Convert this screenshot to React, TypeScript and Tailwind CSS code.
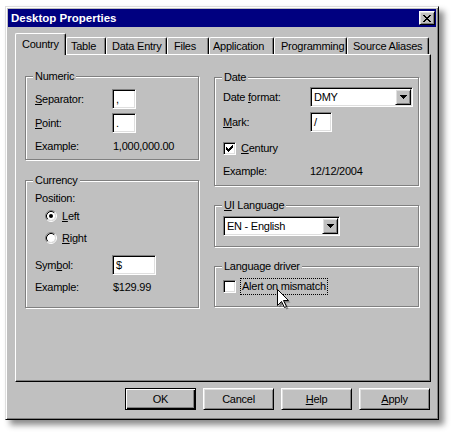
import React from "react";

const raised =
  "border border-t-white border-l-white border-r-black border-b-black shadow-[inset_1px_1px_#dfdfdf,inset_-1px_-1px_#808080]";
const sunken =
  "border border-t-[#808080] border-l-[#808080] border-r-white border-b-white shadow-[inset_1px_1px_#000,inset_-1px_-1px_#dfdfdf] bg-white";

function U({ children }: { children: React.ReactNode }) {
  return <span className="underline underline-offset-[1px] decoration-1">{children}</span>;
}

function Group({
  label,
  className,
  children,
}: {
  label: React.ReactNode;
  className: string;
  children?: React.ReactNode;
}) {
  return (
    <div
      className={`relative border border-[#808080] shadow-[inset_1px_1px_#fff,1px_1px_#fff] ${className}`}
    >
      <span className="absolute left-[7px] top-[-7px] bg-[#c0c0c0] px-[2px] leading-[13px]">
        {label}
      </span>
      {children}
    </div>
  );
}

function Radio({ checked }: { checked?: boolean }) {
  return (
    <svg width="12" height="12" viewBox="0 0 12 12">
      <path d="M2.11 9.89A5.5 5.5 0 0 1 9.89 2.11" fill="none" stroke="#808080" />
      <path d="M9.89 2.11A5.5 5.5 0 0 1 2.11 9.89" fill="none" stroke="#fff" />
      <circle cx="6" cy="6" r="4" fill="#fff" />
      <path d="M2.82 9.18A4.5 4.5 0 0 1 9.18 2.82" fill="none" stroke="#000" />
      <path d="M9.18 2.82A4.5 4.5 0 0 1 2.82 9.18" fill="none" stroke="#dfdfdf" />
      {checked && <circle cx="6" cy="6" r="2" fill="#000" />}
    </svg>
  );
}

function Check({ checked }: { checked?: boolean }) {
  const tops = [2, 3, 4, 3, 2, 1, 0];
  return (
    <div className={`w-[13px] h-[13px] shrink-0 ${sunken} flex items-center justify-center`}>
      {checked && (
        <svg width="7" height="7" viewBox="0 0 7 7" shapeRendering="crispEdges">
          {tops.map((t, c) => (
            <rect key={c} x={c} y={t} width="1" height="3" fill="#000" />
          ))}
        </svg>
      )}
    </div>
  );
}

function DropArrow() {
  return (
    <svg width="7" height="4" viewBox="0 0 7 4" shapeRendering="crispEdges">
      <rect x="0" y="0" width="7" height="1" fill="#000" />
      <rect x="1" y="1" width="5" height="1" fill="#000" />
      <rect x="2" y="2" width="3" height="1" fill="#000" />
      <rect x="3" y="3" width="1" height="1" fill="#000" />
    </svg>
  );
}

function Select({ value, className }: { value: string; className: string }) {
  return (
    <div className={`${sunken} h-[20px] flex items-center ${className}`}>
      <span className="flex-1 pl-[3px]">{value}</span>
      <div className={`${raised} bg-[#c0c0c0] w-[16px] h-[16px] flex items-center justify-center mr-[1px]`}>
        <DropArrow />
      </div>
    </div>
  );
}

function CloseX() {
  const rows: [number, number][][] = [
    [[0, 2], [6, 2]],
    [[1, 2], [5, 2]],
    [[2, 4]],
    [[3, 2]],
    [[2, 4]],
    [[1, 2], [5, 2]],
    [[0, 2], [6, 2]],
  ];
  return (
    <svg width="8" height="7" viewBox="0 0 8 7" shapeRendering="crispEdges">
      {rows.map((r, y) =>
        r.map(([x, w], i) => <rect key={`${y}-${i}`} x={x} y={y} width={w} height="1" fill="#000" />)
      )}
    </svg>
  );
}

function Cursor() {
  return (
    <svg width="16" height="23" viewBox="0 0 16 23" className="absolute left-[277px] top-[289px]">
      <path
        d="M2.5 2.5 V18.5 L6.5 14.5 L9.5 20.5 L11.5 19.5 L8.5 13.5 H13.5 Z"
        fill="rgba(0,0,0,0.35)"
      />
      <path
        d="M0.5 0.5 V16.5 L4.5 12.5 L7.5 18.5 L9.5 17.5 L6.5 11.5 H11.5 Z"
        fill="#fff"
        stroke="#000"
        strokeLinejoin="miter"
      />
    </svg>
  );
}

const tabs = [
  { label: "Table", w: "w-[40px]", pl: "pl-[4px]" },
  { label: "Data Entry", w: "w-[61px]", pl: "pl-[5px]" },
  { label: "Files", w: "w-[42px]", pl: "pl-[6px]" },
  { label: "Application", w: "w-[65px]", pl: "pl-[3px]" },
  { label: "Programming", w: "w-[73px]", pl: "pl-[6px]" },
  { label: "Source Aliases", w: "w-[82px]", pl: "pl-[5px]" },
];

function Button({ children, def }: { children: React.ReactNode; def?: boolean }) {
  const cls = def
    ? "border border-black shadow-[inset_1px_1px_#fff,inset_-1px_-1px_#000,inset_-2px_-2px_#808080]"
    : raised;
  return (
    <div className={`${cls} w-[71px] h-[22px] flex items-center justify-center`}>{children}</div>
  );
}

export default function App() {
  return (
    <div className="relative w-[454px] h-[434px] bg-white pl-[5px] pt-[6px] font-['Liberation_Sans',Arial,sans-serif] text-[11px] tracking-[-0.25px] leading-[13px] text-black">
      <div className="w-[434px] h-[414px] bg-[#c0c0c0] border border-t-[#dfdfdf] border-l-[#dfdfdf] border-r-black border-b-black p-[2px] shadow-[inset_1px_1px_#fff,inset_-1px_-1px_#808080,5px_5px_6px_rgba(0,0,0,0.45)] flex flex-col">
        {/* Title bar */}
        <div className="h-[18px] bg-[#000080] flex items-center justify-between pl-[3px] shrink-0">
          <span className="text-white font-bold text-[11.5px] tracking-normal">Desktop Properties</span>
          <div className={`${raised} bg-[#c0c0c0] w-[16px] h-[14px] mr-[1px] flex items-center justify-center`}>
            <CloseX />
          </div>
        </div>

        <div className="pl-[7px] pr-[5px] pt-[6px] flex flex-col">
          {/* Tabs */}
          <div className="flex items-end h-[21px]">
            <div className="relative z-10 mb-[-1px] w-[51px] h-[22px] bg-[#c0c0c0] border-t border-l border-t-white border-l-white border-r border-r-black shadow-[inset_-1px_0_#808080] rounded-t-[2px] flex items-center pl-[6px] pb-[1px]">
              Country
            </div>
            {tabs.map((t) => (
              <div
                key={t.label}
                className={`${t.w} ${t.pl} h-[17px] border-t border-l border-t-white border-l-white border-r border-r-black shadow-[inset_-1px_0_#808080] rounded-t-[2px] flex items-center`}
              >
                {t.label}
              </div>
            ))}
          </div>

          {/* Panel */}
          <div className="h-[328px] border border-t-white border-l-white border-r-black border-b-black shadow-[inset_-1px_-1px_#808080] pl-[9px] pt-[21px] flex gap-[15px]">
            {/* Left column */}
            <div className="w-[174px] flex flex-col gap-[20px]">
              <Group label="Numeric" className="h-[84px]">
                <div className="flex flex-col pl-[9px] pt-[12px]">
                  <div className="flex items-center h-[20px]">
                    <span className="w-[77px]">
                      <U>S</U>eparator:
                    </span>
                    <div className={`${sunken} w-[24px] h-[20px] pl-[3px] flex items-center`}>,</div>
                  </div>
                  <div className="flex items-center h-[20px] mt-[4px]">
                    <span className="w-[77px]">
                      <U>P</U>oint:
                    </span>
                    <div className={`${sunken} w-[24px] h-[20px] pl-[3px] flex items-center`}>.</div>
                  </div>
                  <div className="flex items-center h-[20px] mt-[3px]">
                    <span className="w-[78px]">Example:</span>
                    <span>1,000,000.00</span>
                  </div>
                </div>
              </Group>

              <Group label="Currency" className="h-[128px]">
                <div className="flex flex-col pl-[9px] pt-[7px]">
                  <div className="flex items-center h-[20px]">Position:</div>
                  <div className="flex items-center h-[16px] pl-[10px] gap-[5px]">
                    <Radio checked />
                    <span>
                      <U>L</U>eft
                    </span>
                  </div>
                  <div className="flex items-center h-[16px] pl-[10px] gap-[5px] mt-[6px]">
                    <Radio />
                    <span>
                      <U>R</U>ight
                    </span>
                  </div>
                  <div className="flex items-center h-[20px] mt-[9px]">
                    <span className="w-[77px]">
                      Sym<U>b</U>ol:
                    </span>
                    <div className={`${sunken} w-[44px] h-[20px] pl-[3px] flex items-center`}>$</div>
                  </div>
                  <div className="flex items-center h-[20px] mt-[2px]">
                    <span className="w-[78px]">Example:</span>
                    <span>$129.99</span>
                  </div>
                </div>
              </Group>
            </div>

            {/* Right column */}
            <div className="w-[205px] flex flex-col gap-[19px] mt-[1px]">
              <Group label="Date" className="h-[109px]">
                <div className="flex flex-col pl-[8px] pt-[9px]">
                  <div className="flex items-center h-[20px]">
                    <span className="w-[87px]">
                      Date <U>f</U>ormat:
                    </span>
                    <Select value="DMY" className="w-[103px]" />
                  </div>
                  <div className="flex items-center h-[20px] mt-[5px]">
                    <span className="w-[87px]">
                      <U>M</U>ark:
                    </span>
                    <div className={`${sunken} w-[22px] h-[20px] pl-[3px] flex items-center`}>/</div>
                  </div>
                  <div className="flex items-center h-[16px] mt-[8px] gap-[5px]">
                    <Check checked />
                    <span>
                      <U>C</U>entury
                    </span>
                  </div>
                  <div className="flex items-center h-[20px] mt-[5px]">
                    <span className="w-[87px]">Example:</span>
                    <span>12/12/2004</span>
                  </div>
                </div>
              </Group>

              <Group
                label={
                  <>
                    <U>U</U>I Language
                  </>
                }
                className="h-[42px]"
              >
                <div className="pl-[8px] pt-[10px]">
                  <Select value="EN - English" className="w-[117px]" />
                </div>
              </Group>

              <Group label="Language driver" className="h-[41px]">
                <div className="pl-[8px] pt-[11px] flex items-center h-[28px] gap-[4px]">
                  <Check />
                  <span className="border border-dotted border-black h-[17px] px-[1px] flex items-center">
                    Alert on mismatch
                  </span>
                </div>
              </Group>
            </div>
          </div>

          {/* Buttons */}
          <div className="flex justify-end gap-[7px] mt-[6px] pr-[1px]">
            <Button def>OK</Button>
            <Button>Cancel</Button>
            <Button>
              <U>H</U>elp
            </Button>
            <Button>
              <U>A</U>pply
            </Button>
          </div>
        </div>
      </div>
      <Cursor />
    </div>
  );
}
